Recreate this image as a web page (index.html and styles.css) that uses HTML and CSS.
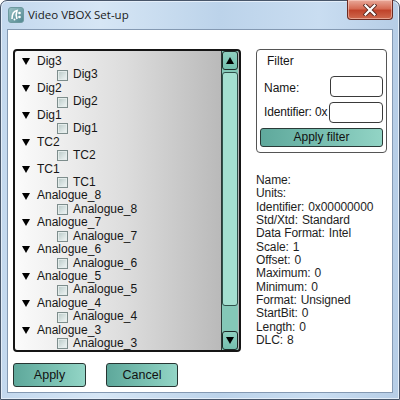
FILE: index.html
```html
<!DOCTYPE html>
<html>
<head>
<meta charset="utf-8">
<link rel="stylesheet" href="styles.css">
</head>
<body>
<div class="window">
  <div class="titlebar">
    <svg class="appicon" width="16" height="16" viewBox="0 0 16 16">
      <defs>
        <linearGradient id="ig" x1="0" y1="0" x2="1" y2="1">
          <stop offset="0" stop-color="#9cc3c6"/>
          <stop offset="1" stop-color="#4f8690"/>
        </linearGradient>
      </defs>
      <rect x="0.5" y="0.5" width="15" height="15" rx="2.5" fill="url(#ig)" stroke="#6d9aa0"/>
      <path d="M4 12 C4 7 6 4 9 3.5 C8 6 8 9 9 12" fill="none" stroke="#fff" stroke-width="1.6"/>
      <circle cx="11.5" cy="6" r="1.3" fill="#fff"/>
      <circle cx="11.5" cy="10" r="1.3" fill="#fff"/>
      <circle cx="6.5" cy="12.5" r="1" fill="#fff"/>
    </svg>
    <span class="title">Video VBOX Set-up</span>
    <div class="close">
      <svg width="14" height="12" viewBox="0 0 14 12">
        <path d="M2.5 1.5 L11.5 10.5 M11.5 1.5 L2.5 10.5" stroke="#5a2a22" stroke-width="4" stroke-linecap="square"/>
        <path d="M2.5 1.5 L11.5 10.5 M11.5 1.5 L2.5 10.5" stroke="#fff" stroke-width="2.2" stroke-linecap="square"/>
      </svg>
    </div>
  </div>
  <div class="client">
    <div class="main">
      <div class="treebox">
        <div class="tree">
          <div class="prow"><span class="tri"></span>Dig3</div>
          <div class="crow"><span class="chk"></span>Dig3</div>
          <div class="prow"><span class="tri"></span>Dig2</div>
          <div class="crow"><span class="chk"></span>Dig2</div>
          <div class="prow"><span class="tri"></span>Dig1</div>
          <div class="crow"><span class="chk"></span>Dig1</div>
          <div class="prow"><span class="tri"></span>TC2</div>
          <div class="crow"><span class="chk"></span>TC2</div>
          <div class="prow"><span class="tri"></span>TC1</div>
          <div class="crow"><span class="chk"></span>TC1</div>
          <div class="prow"><span class="tri"></span>Analogue_8</div>
          <div class="crow"><span class="chk"></span>Analogue_8</div>
          <div class="prow"><span class="tri"></span>Analogue_7</div>
          <div class="crow"><span class="chk"></span>Analogue_7</div>
          <div class="prow"><span class="tri"></span>Analogue_6</div>
          <div class="crow"><span class="chk"></span>Analogue_6</div>
          <div class="prow"><span class="tri"></span>Analogue_5</div>
          <div class="crow"><span class="chk"></span>Analogue_5</div>
          <div class="prow"><span class="tri"></span>Analogue_4</div>
          <div class="crow"><span class="chk"></span>Analogue_4</div>
          <div class="prow"><span class="tri"></span>Analogue_3</div>
          <div class="crow"><span class="chk"></span>Analogue_3</div>
        </div>
        <div class="scrollbar">
          <div class="sbtn"><span class="up"></span></div>
          <div class="thumb"></div>
          <div class="trough"></div>
          <div class="sbtn"><span class="down"></span></div>
        </div>
      </div>
      <div class="side">
        <div class="filter">
          <div class="ftitle">Filter</div>
          <div class="frow name-row"><span class="flabel">Name:</span><span class="input"></span></div>
          <div class="frow id-row"><span class="flabel">Identifier: 0x</span><span class="input"></span></div>
          <div class="fbtn">Apply filter</div>
        </div>
        <div class="info">
          <div><span>Name:</span></div>
          <div><span>Units:</span></div>
          <div><span>Identifier:</span><span class="val">0x00000000</span></div>
          <div><span>Std/Xtd:</span><span class="val">Standard</span></div>
          <div><span>Data Format:</span><span class="val">Intel</span></div>
          <div><span>Scale:</span><span class="val">1</span></div>
          <div><span>Offset:</span><span class="val">0</span></div>
          <div><span>Maximum:</span><span class="val">0</span></div>
          <div><span>Minimum:</span><span class="val">0</span></div>
          <div><span>Format:</span><span class="val">Unsigned</span></div>
          <div><span>StartBit:</span><span class="val">0</span></div>
          <div><span>Length:</span><span class="val">0</span></div>
          <div><span>DLC:</span><span class="val">8</span></div>
        </div>
      </div>
    </div>
    <div class="buttons">
      <div class="btn apply">Apply</div>
      <div class="btn cancel">Cancel</div>
    </div>
  </div>
</div>
</body>
</html>
```

FILE: styles.css
```css
html, body {
  margin: 0;
  padding: 0;
}
body {
  width: 400px;
  height: 400px;
  overflow: hidden;
  background: #ffffff;
  font-family: "Liberation Sans", Arial, sans-serif;
  font-size: 12px;
  color: #161616;
}
.window {
  box-sizing: border-box;
  width: 400px;
  height: 400px;
  border: 1px solid #48566a;
  border-radius: 7px 7px 0 0;
  padding: 0 6px 6px 6px;
  display: flex;
  flex-direction: column;
  background: linear-gradient(to right, #c3d8ee 0%, #d6e6f5 25%, #bcd3ea 55%, #c9ddf1 80%, #b6cde6 100%);
  box-shadow: inset 0 0 0 1px #e4eef9;
}
.titlebar {
  height: 28px;
  display: flex;
  align-items: center;
}
.appicon {
  margin-left: 1px;
  margin-top: -1px;
  flex: none;
}
.title {
  margin-left: 4px;
  font-family: "Open Sans", "Noto Sans", sans-serif;
  font-size: 11.5px;
  color: #1a1a1a;
  margin-top: -1px;
}
.close {
  margin-left: auto;
  align-self: flex-start;
  margin-top: -1px;
  width: 44px;
  height: 19px;
  border: 1px solid #6b2b22;
  border-top: none;
  border-radius: 0 0 4px 4px;
  background: linear-gradient(to bottom, #e9a99a 0%, #d66c55 45%, #c0432b 55%, #cf6a4f 100%);
  box-shadow: inset 0 0 0 1px rgba(255, 220, 210, 0.5);
  display: flex;
  align-items: center;
  justify-content: center;
}
.client {
  flex: 1;
  background: #ffffff;
  border: 1px solid #8499b2;
  display: flex;
  flex-direction: column;
}
.main {
  display: flex;
  padding: 19px 0 0 5px;
}
.treebox {
  box-sizing: border-box;
  width: 228px;
  height: 303px;
  border: 2px solid #151515;
  border-radius: 4px;
  display: flex;
  background: linear-gradient(to right, #fbfbfb 0%, #dcdcdc 50%, #b3b3b3 100%);
  overflow: hidden;
}
.tree {
  flex: 1;
  overflow: hidden;
  padding-top: 4px;
  white-space: nowrap;
}
.prow, .crow {
  height: 13.45px;
  line-height: 13.45px;
  display: flex;
  align-items: center;
}
.prow {
  padding-left: 7px;
}
.tri {
  width: 0;
  height: 0;
  border-left: 4.5px solid transparent;
  border-right: 4.5px solid transparent;
  border-top: 7px solid #000;
  margin-right: 7px;
}
.crow {
  padding-left: 42px;
}
.chk {
  box-sizing: border-box;
  width: 11px;
  height: 11px;
  border: 1px solid #7d8d8c;
  background: linear-gradient(135deg, #b7c8c6 0%, #dbe5e4 60%, #f2f6f6 100%);
  box-shadow: inset 0 0 0 1px #e4eceb;
  margin-right: 5px;
  flex: none;
}
.scrollbar {
  width: 16px;
  margin-right: 1px;
  display: flex;
  flex-direction: column;
  background: #84c8b7;
  border-left: 1px solid #2a3a36;
}
.sbtn {
  box-sizing: border-box;
  height: 19px;
  border: 1px solid #1e2a28;
  border-radius: 3px;
  background: linear-gradient(to bottom, #8fd0c0, #74bfae);
  display: flex;
  align-items: center;
  justify-content: center;
  flex: none;
}
.up {
  width: 0;
  height: 0;
  border-left: 4.5px solid transparent;
  border-right: 4.5px solid transparent;
  border-bottom: 7px solid #000;
}
.down {
  width: 0;
  height: 0;
  border-left: 4.5px solid transparent;
  border-right: 4.5px solid transparent;
  border-top: 7px solid #000;
}
.thumb {
  box-sizing: border-box;
  margin-top: 2px;
  height: 234px;
  border: 1px solid #2f514a;
  border-radius: 3px;
  background: #a4e0d0;
  flex: none;
}
.trough {
  flex: 1;
}
.side {
  margin-left: 15px;
  width: 131px;
  display: flex;
  flex-direction: column;
}
.filter {
  box-sizing: border-box;
  height: 104px;
  border: 1px solid #555;
  border-radius: 4px;
  padding: 0 3px 0 3px;
  display: flex;
  flex-direction: column;
}
.ftitle {
  height: 22px;
  line-height: 22px;
  padding-left: 7px;
}
.frow {
  display: flex;
  align-items: center;
  padding-left: 4px;
  white-space: nowrap;
}
.name-row {
  height: 26px;
  margin-top: 1px;
}
.id-row {
  height: 26px;
}
.flabel {
  margin-top: 3px;
  flex: none;
  white-space: nowrap;
}
.id-row .flabel {
  margin-top: 0;
  letter-spacing: -0.15px;
}
.input {
  box-sizing: border-box;
  margin-left: auto;
  width: 53px;
  height: 21px;
  border: 1.5px solid #3a3a3a;
  border-radius: 4px;
  background: #fff;
  flex: none;
}
.id-row .input {
  width: 54px;
}
.fbtn {
  box-sizing: border-box;
  margin-top: 3px;
  height: 19px;
  border: 1px solid #2a3a37;
  border-radius: 3px;
  background: linear-gradient(to right, #5fa99c 0%, #7cc2b4 60%, #92d4c5 100%);
  text-align: center;
  line-height: 17px;
  color: #111;
}
.info {
  margin-top: 21px;
  line-height: 13.33px;
  white-space: nowrap;
  color: #1e1e1e;
  letter-spacing: -0.1px;
}
.val {
  margin-left: 4px;
}
.buttons {
  display: flex;
  gap: 20px;
  padding-left: 5px;
  margin-top: 11px;
}
.btn {
  box-sizing: border-box;
  height: 24px;
  line-height: 22px;
  border: 1px solid #263532;
  border-radius: 3px;
  background: linear-gradient(to right, #5ea89b 0%, #7cc3b4 60%, #93d5c6 100%);
  text-align: center;
  color: #111;
  font-size: 12.5px;
}
.apply {
  width: 73px;
}
.cancel {
  width: 72px;
}
```
